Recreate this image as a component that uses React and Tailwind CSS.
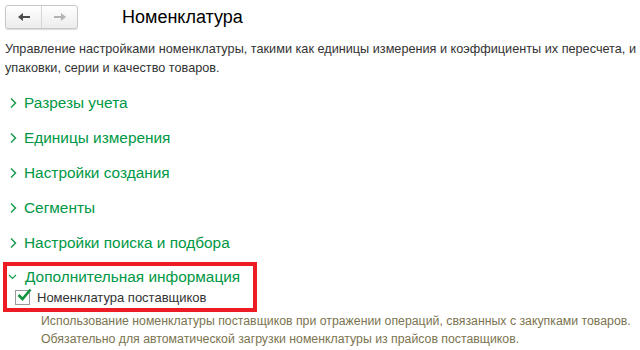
import React from 'react';

const sections = [
    "Разрезы учета",
    "Единицы измерения",
    "Настройки создания",
    "Сегменты",
    "Настройки поиска и подбора",
];

function Chevron({open}) {
    return open
        ? <svg width="9" height="8" viewBox="0 0 9 8" className="shrink-0">
              <path d="M1 2 L4.5 5.5 L8 2" fill="none" stroke="#1a9b4f" strokeWidth="1.2"/>
          </svg>
        : <svg width="9" height="12" viewBox="0 0 9 12" className="shrink-0">
              <path d="M2 1.5 L6.5 6 L2 10.5" fill="none" stroke="#1a9b4f" strokeWidth="1.5"/>
          </svg>;
}

function App() {
    return (
        <div className="w-[640px] h-[350px] bg-white overflow-hidden text-[#333] font-['Liberation_Sans',Arial,sans-serif]">
            <header className="flex items-center h-[34px] pl-[5px]">
                <div className="flex h-[24px] w-[73px] rounded-[3px] border border-[#c8c8c8] bg-gradient-to-b from-white to-[#ececec] shadow-[0_1px_1px_rgba(0,0,0,0.15)]">
                    <div className="flex-1 flex items-center justify-center border-r border-[#d6d6d6]">
                        <svg width="14" height="10" viewBox="0 0 14 10">
                            <path d="M1 5 L6 1 V4 H13 V6 H6 V9 Z" fill="#4a4a4a"/>
                        </svg>
                    </div>
                    <div className="flex-1 flex items-center justify-center">
                        <svg width="14" height="10" viewBox="0 0 14 10">
                            <path d="M13 5 L8 1 V4 H1 V6 H8 V9 Z" fill="#b3b3b3"/>
                        </svg>
                    </div>
                </div>
                <h1 className="ml-[44px] text-[18px] text-black leading-none">Номенклатура</h1>
            </header>

            <p className="mt-[6px] pl-[5px] text-[12.7px] leading-[19px] whitespace-nowrap">
                Управление настройками номенклатуры, такими как единицы измерения и коэффициенты их пересчета, и<br/>
                упаковки, серии и качество товаров.
            </p>

            <div className="mt-[7px] flex flex-col">
                {sections.map(s => (
                    <div key={s} className="flex items-center h-[35px] pl-[9px] gap-[6px]">
                        <Chevron/>
                        <span className="text-[15.4px] text-[#009845]">{s}</span>
                    </div>
                ))}
            </div>

            <div className="mt-[2px] ml-[3px] w-[254px] border-[4px] border-[#ed1c24] pl-[1px] pb-[1px]">
                <div className="flex items-center gap-[8px] h-[22px]">
                    <Chevron open/>
                    <span className="text-[15.4px] text-[#009845]">Дополнительная информация</span>
                </div>
                <div className="flex items-center gap-[7px] h-[19px] pl-[7px]">
                    <div className="relative w-[15px] h-[15px] border border-[#9a9a9a] bg-white shrink-0">
                        <svg width="17" height="15" viewBox="0 0 17 15" className="absolute -top-[4px] left-0">
                            <path d="M2.5 8 L6.5 12 L14.5 2.5" fill="none" stroke="#12923f" strokeWidth="2.6"/>
                        </svg>
                    </div>
                    <span className="text-[13px] text-[#333]">Номенклатура поставщиков</span>
                </div>
            </div>

            <p className="pl-[41px] text-[12.3px] leading-[18px] text-[#7b7450] whitespace-nowrap">
                Использование номенклатуры поставщиков при отражении операций, связанных с закупками товаров.<br/>
                Обязательно для автоматической загрузки номенклатуры из прайсов поставщиков.
            </p>
        </div>
    );
}

export default App;
